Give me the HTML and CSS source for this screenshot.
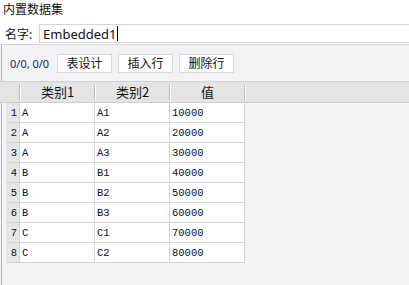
FILE: index.html
```html
<!DOCTYPE html>
<html lang="zh-CN">
<head>
    <meta charset="UTF-8">
    <title>内置数据集</title>
    <link rel="stylesheet" href="styles.css">
</head>
<body>
    <div class="title">内置数据集</div>

    <div class="name-row">
        <span class="name-label">名字:</span>
        <div class="name-input">Embedded1<span class="caret"></span></div>
    </div>

    <div class="panel">
        <div class="toolbar">
            <span class="pos">0/0, 0/0</span>
            <button class="btn">表设计</button>
            <button class="btn">插入行</button>
            <button class="btn">删除行</button>
        </div>

        <div class="grid">
            <div class="grid-head">
                <div class="hcell num"></div>
                <div class="hcell">类别1</div>
                <div class="hcell">类别2</div>
                <div class="hcell">值</div>
            </div>
            <table class="data">
                <tr><td class="num">1</td><td>A</td><td>A1</td><td>10000</td></tr>
                <tr><td class="num">2</td><td>A</td><td>A2</td><td>20000</td></tr>
                <tr><td class="num">3</td><td>A</td><td>A3</td><td>30000</td></tr>
                <tr><td class="num">4</td><td>B</td><td>B1</td><td>40000</td></tr>
                <tr><td class="num">5</td><td>B</td><td>B2</td><td>50000</td></tr>
                <tr><td class="num">6</td><td>B</td><td>B3</td><td>60000</td></tr>
                <tr><td class="num">7</td><td>C</td><td>C1</td><td>70000</td></tr>
                <tr><td class="num">8</td><td>C</td><td>C2</td><td>80000</td></tr>
            </table>
        </div>
    </div>
</body>
</html>
```

FILE: styles.css
```css
body {
    margin: 0;
    width: 409px;
    height: 285px;
    overflow: hidden;
    background: #f3f3f5;
    font-family: "Noto Sans CJK SC", "Noto Sans", sans-serif;
    color: #111;
}

.title {
    height: 22px;
    background: #fff;
    font-size: 12px;
    line-height: 18px;
    padding-left: 3px;
}

.name-row {
    display: flex;
    align-items: center;
    height: 21px;
    background: #fff;
    padding-top: 1px;
}

.name-label {
    width: 39px;
    padding-left: 5px;
    box-sizing: border-box;
    font-size: 12px;
    line-height: 18px;
}

.name-input {
    flex: 1;
    height: 19px;
    box-sizing: border-box;
    border: 1px solid #d6d6d6;
    border-right: none;
    background: #fff;
    font-family: "Noto Sans", sans-serif;
    font-size: 13px;
    line-height: 16px;
    padding-left: 3px;
    display: flex;
    align-items: center;
}

.caret {
    display: inline-block;
    width: 1px;
    height: 15px;
    background: #000;
    margin-left: 1px;
}

.panel {
    border-top: 1px solid #d6d6d6;
    height: 241px;
    box-sizing: border-box;
    box-shadow: inset 1px 0 0 #f3f3f5, inset 2px 0 0 #b4b4b4;
}

.toolbar {
    display: flex;
    align-items: center;
    height: 36px;
    padding-left: 10px;
}

.pos {
    font-family: "Noto Sans", sans-serif;
    font-size: 11px;
    color: #1a2450;
    width: 47px;
}

.btn {
    width: 55px;
    height: 19px;
    margin-right: 6px;
    padding: 0;
    background: #fff;
    border: 1px solid #d9d9d9;
    font-family: "Noto Sans CJK SC", sans-serif;
    font-size: 12px;
    line-height: 16px;
    color: #111;
}

.grid {
    border-top: 1px solid #d2d2d2;
}

.grid-head {
    display: flex;
    height: 20px;
    background: #e4e4e4;
    border-bottom: 1px solid #cfcfcf;
    padding-left: 6px;
}

.hcell {
    width: 75px;
    box-sizing: border-box;
    text-align: center;
    font-size: 13px;
    line-height: 20px;
    position: relative;
}

.hcell::after {
    content: "";
    position: absolute;
    right: 0;
    top: 3px;
    width: 1px;
    height: 15px;
    background: #bdbdbd;
    box-shadow: 1px 0 0 #fff;
}

.hcell.num {
    width: 14px;
}

.data {
    border-collapse: collapse;
    table-layout: fixed;
    margin-left: 6px;
    font-family: "Liberation Mono", monospace;
    font-size: 10.5px;
    color: #081030;
}

.data td {
    width: 72px;
    height: 19px;
    padding: 0 0 0 2px;
    background: #fff;
    border: 1px solid #d4d4d4;
    border-top: none;
    border-left: none;
}

.data td.num {
    width: 11px;
    background: #e6e6e6;
    text-align: right;
    padding: 0 2px 0 0;
}
```
